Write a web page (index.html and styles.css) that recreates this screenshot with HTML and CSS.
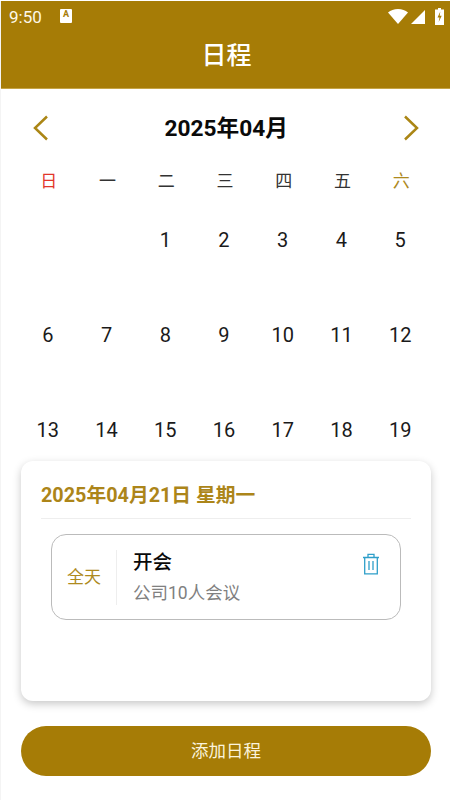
FILE: index.html
```html
<!DOCTYPE html>
<html lang="zh">
<head>
<meta charset="utf-8">
<title>日程</title>
<link rel="stylesheet" href="styles.css">
</head>
<body>
<div class="app">
  <header class="top">
    <div class="status">
      <span class="time">9:50</span>
      <span class="a-badge">A</span>
      <span class="status-icons">
        <svg class="i-wifi" width="20" height="15" viewBox="0 0 20 15"><path d="M0 3.6C2.6 1.3 6 0 10 0s7.400 1.300 10 3.600L10 15z" fill="#fff"/></svg>
        <svg class="i-signal" width="14" height="14" viewBox="0 0 14 14"><path d="M14 0v14H0z" fill="#fff"/></svg>
        <svg class="i-batt" width="9" height="17" viewBox="0 0 9 17"><path d="M3 0h3v1.500h3V17H0V1.500h3z" fill="#fff"/><path d="M5.300 3.500 2.500 9.500h2l-.8 4.500 3-6.300h-2z" fill="#a67c06"/></svg>
      </span>
    </div>
    <h1 class="title">日程</h1>
  </header>

  <main class="body">
    <section class="calendar">
      <div class="month-bar">
        <svg class="chev" width="16" height="26" viewBox="0 0 16 26"><path d="M14 1.500 2 13l12 11.500" fill="none" stroke="#ab8615" stroke-width="2.500"/></svg>
        <div class="month">2025年04月</div>
        <svg class="chev" width="16" height="26" viewBox="0 0 16 26"><path d="M2 1.500 14 13 2 24.500" fill="none" stroke="#ab8615" stroke-width="2.500"/></svg>
      </div>
      <div class="weekdays">
        <span class="sun">日</span><span>一</span><span>二</span><span>三</span><span>四</span><span>五</span><span class="sat">六</span>
      </div>
      <div class="days">
        <span></span><span></span><span>1</span><span>2</span><span>3</span><span>4</span><span>5</span>
        <span>6</span><span>7</span><span>8</span><span>9</span><span>10</span><span>11</span><span>12</span>
        <span>13</span><span>14</span><span>15</span><span>16</span><span>17</span><span>18</span><span>19</span>
      </div>
    </section>

    <section class="panel">
      <div class="panel-date">2025年04月21日 星期一</div>
      <div class="event">
        <div class="event-time">全天</div>
        <div class="event-text">
          <div class="event-name">开会</div>
          <div class="event-desc">公司10人会议</div>
        </div>
        <svg class="trash" width="18" height="22" viewBox="0 0 18 22" fill="none" stroke="#2f9fc9" stroke-width="1.300">
          <path d="M1 4.500h16M6 4.500V1.300h6v3.200M2.700 4.500v16.300h12.600V4.500M7 8v9M11 8v9"/>
        </svg>
      </div>
    </section>

    <button class="add">添加日程</button>
  </main>
</div>
</body>
</html>
```
FILE: styles.css
```css
* { box-sizing: border-box; }
html, body { margin: 0; height: 100%; background: #fff; }
body { font-family: Roboto, "Noto Sans CJK SC", sans-serif; overflow: hidden; }
.app { margin: 1px 0 0 1px; width: 449px; height: 799px; display: flex; flex-direction: column; box-shadow: -1px 0 0 #f4f4f4; }

.top { height: 88px; background: #a67c06; color: #fff; border-bottom: 1px solid #c5a445; flex: none; }
.status { height: 32px; display: flex; align-items: center; padding: 0 6px 0 8px; }
.time { font-size: 17px; width: 51px; line-height: 30px; color: #fdf8e8; }
.a-badge { width: 12px; height: 14px; background: #fff; color: #a67c06; font-size: 9px; font-weight: 700; line-height: 11px; text-align: center; border-radius: 1px; margin-top: -3px; }
.status-icons { margin-left: auto; display: flex; align-items: center; }
.i-wifi { margin-right: 3px; margin-top: -1px; }
.i-signal { margin-right: 10px; }
.i-batt { margin-top: -2px; }
.title { margin: 0; padding-left: 2px; text-align: center; font-size: 25px; font-weight: 500; line-height: 46px; }

.body { flex: 1; display: flex; flex-direction: column; padding: 0 19px 0 20px; }

.calendar { height: 372px; overflow: hidden; margin: 0 1.500px 0 -2.500px; flex: none; }
.month-bar { display: flex; align-items: center; justify-content: space-between; padding: 0 10px 0 14.500px; height: 78px; }
.month { font-size: 22.700px; font-weight: 700; color: #0a0a0a; padding-bottom: 4px; }
.weekdays, .days { display: grid; grid-template-columns: repeat(7, 1fr); text-align: center; }
.weekdays { font-size: 17px; line-height: 28px; color: #333; height: 28px; margin-left: 1px; margin-right: -1px; }
.sun { color: #e2362b; }
.sat { color: #ae8a1e; }
.days { font-size: 20px; color: #1a1a1a; grid-auto-rows: 95px; align-items: center; transform: translateY(-2px); }
.days span { line-height: 95px; }

.panel { height: 240px; background: #fff; border-radius: 12px; box-shadow: 0 3px 8px rgba(0,0,0,.22); padding: 0 20px; flex: none; }
.panel-date { height: 58px; line-height: 69px; font-size: 19.800px; font-weight: 700; color: #ac8519; border-bottom: 1px solid #eee; }
.event { margin: 15px 10px 0; height: 86px; border: 1px solid #bbb; border-radius: 15px; display: flex; align-items: center; position: relative; }
.event-time { width: 65px; height: 55px; line-height: 55px; text-align: center; font-size: 17px; color: #ae8a1e; border-right: 1px solid #eee; flex: none; }
.event-text { padding-left: 16px; flex: 1; }
.event-name { font-size: 19.500px; font-weight: 500; color: #0a0a0a; line-height: 28px; padding-top: 3px; }
.event-desc { font-size: 17.500px; color: #808080; line-height: 30px; margin-top: 1px; }
.trash { position: absolute; right: 20px; top: 18px; }

.add { margin-top: 25px; height: 50px; padding: 0 0 3px; border: 0; border-radius: 25px; background: #a67c06; color: #fbf3dc; font-family: inherit; font-size: 17.500px; flex: none; }
```
